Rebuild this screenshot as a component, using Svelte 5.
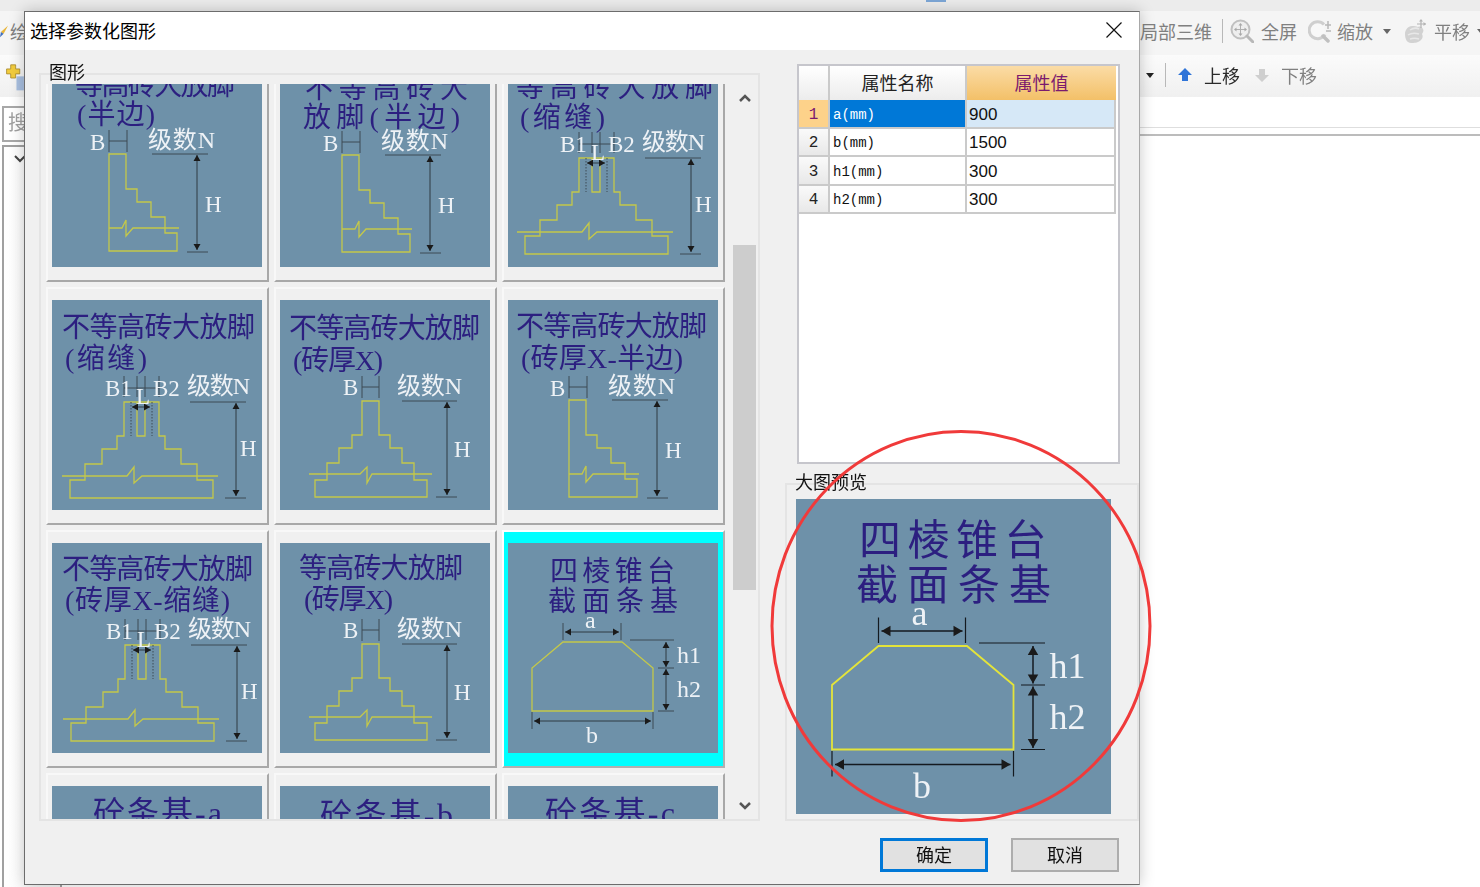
<script>
  const cells = [
    { kind: 'half', dx: 0, dy: 0, t: [['等高砖大放脚', 23, 38, 160], ['(半边)', 25, 67, 78]] },
    { kind: 'half', dx: 5, dy: 1, t: [['不等高砖大', 25, 41, 163], ['放脚(半边)', 23, 70, 157]] },
    { kind: 'slit', dx: -1, dy: -1, t: [['等高砖大放脚', 8, 40, 197], ['(缩缝)', 12, 70, 85]] },
    { kind: 'slit', dx: 0, dy: 0, t: [['不等高砖大放脚', 10, 37, 193], ['(缩缝)', 13, 68, 82]] },
    { kind: 'full', dx: 0, dy: 0, t: [['不等高砖大放脚', 9, 38, 191], ['(砖厚X)', 13, 70, 90]] },
    { kind: 'half', dx: 4, dy: 3, t: [['不等高砖大放脚', 8, 36, 191], ['(砖厚X-半边)', 13, 68, 162]] },
    { kind: 'slit', dx: 1, dy: 0, t: [['不等高砖大放脚', 10, 36, 191], ['(砖厚X-缩缝)', 13, 67, 165]] },
    { kind: 'full', dx: 0, dy: 0, t: [['等高砖大放脚', 19, 35, 164], ['(砖厚X)', 24, 66, 89]] },
    { kind: 'trap', selected: true },
    { kind: 'none', wide: true, t: [['砼条基-a', 41, 38, 129]] },
    { kind: 'none', wide: true, t: [['砼条基-b', 40, 40, 133]] },
    { kind: 'none', wide: true, t: [['砼条基-c', 37, 38, 130]] }
  ];
  const rows = [
    { n: '1', name: 'a(mm)', value: '900', active: true },
    { n: '2', name: 'b(mm)', value: '1500' },
    { n: '3', name: 'h1(mm)', value: '300' },
    { n: '4', name: 'h2(mm)', value: '300' }
  ];
</script>

{#snippet vdim(x, y1, y2)}
  <path class="dim" d="M{x} {y1}V{y2}" />
  <path class="tip" d="M{x} {y1}l-3.500 6h7zM{x} {y2}l-3.500 -6h7z" />
{/snippet}

{#snippet hdim(y, x1, x2)}
  <path class="dim" d="M{x1} {y}H{x2}" />
  <path class="tip" d="M{x1} {y}l6 -3.500v7zM{x2} {y}l-6 -3.500v7z" />
{/snippet}

{#snippet diagram(c, large)}
  <svg class="art" class:large viewBox="0 0 210 210" aria-hidden="true">
    {#if c.t}
      {#each c.t as [text, x, y, len]}
        <text class="ttl" class:wide={c.wide} {x} {y} textLength={len}>{text}</text>
      {/each}
    {/if}
    <g transform="translate({c.dx || 0} {c.dy || 0})">
      {#if c.kind === 'half'}
        <path class="y" d="M57 97H74V132H85V145H99V160H113V176H125V194H57Z" />
        <path class="y" d="M57 171H70L74 163V179L81 171H127" />
        <path class="tick" d="M57 73V95M75 73V95M57 84H75M100 97H156M135 195H156" />
        {@render vdim(145, 98, 193)}
        <text class="lbl" x="38" y="93">B</text>
        <text class="lbl lvl" x="96" y="91" textLength="67">级数N</text>
        <text class="lbl" x="153" y="155">H</text>
      {:else if c.kind === 'full'}
        <path class="y" d="M82 101H99V135H110V148H122V163H134V180H147V197H35V180H47V163H59V148H72V135H82Z" />
        <path class="y" d="M29 174H80L87 167V183L92 174H152" />
        <path class="tick" d="M82 76V98M99 76V98M82 87H99M122 101H177M156 197H177" />
        {@render vdim(167, 102, 195)}
        <text class="lbl" x="63" y="95">B</text>
        <text class="lbl lvl" x="117" y="94" textLength="65">级数N</text>
        <text class="lbl" x="174" y="157">H</text>
      {:else if c.kind === 'slit'}
        <path class="y" d="M72 102H107V136H113V149H129V164H145V180H161V198H18V180H33V164H50V149H65V136H72Z" />
        <path class="y" d="M85 102V136H93V102" />
        <path class="y" d="M10 176H75L82 167V183L90 176H166" />
        <path class="dots" d="M79 102V136M100 102V136" />
        <path class="tick" d="M72 76V97M85 76V97M93 76V97M107 76V97M72 88H107M138 102H194M173 198H194" />
        {@render hdim(107, 80, 98)}
        {@render vdim(184, 103, 196)}
        <text class="lbl" x="53" y="96">B1</text>
        <text class="lbl" x="84" y="104">L</text>
        <text class="lbl" x="101" y="96">B2</text>
        <text class="lbl lvl" x="135" y="94" textLength="63">级数N</text>
        <text class="lbl" x="188" y="156">H</text>
      {:else if c.kind === 'trap'}
        <text class="ttl" x="42" y="38" textLength="125">四棱锥台</text>
        <text class="ttl" x="40" y="68" textLength="130">截面条基</text>
        <path class="y" d="M55 99H114L145 125V168H24V125Z" />
        <path class="tick" d="M55 80V97M113 80V97M122 97H166M150 125H166M150 168H166M24 169V186M145 169V186" />
        {@render hdim(89, 57, 111)}
        {@render vdim(158, 99, 124)}
        {@render vdim(158, 126, 167)}
        {@render hdim(178, 26, 143)}
        <text class="lbl big" x="77" y="85">a</text>
        <text class="lbl big" x="169" y="120">h1</text>
        <text class="lbl big" x="169" y="154">h2</text>
        <text class="lbl big" x="78" y="200">b</text>
      {/if}
    </g>
  </svg>
{/snippet}

{#snippet caret(dark)}
  <svg class="caret" viewBox="0 0 8 5" aria-hidden="true"><path d="M0 0h8L4 5z" fill={dark ? '#222' : '#666'} /></svg>
{/snippet}

<div class="page">
  <div class="strip"><span class="tab-mark"></span></div>

  <div class="bar bar1">
    <svg class="pencil" viewBox="0 0 10 16" aria-hidden="true"><path d="M9 2L4 11 1 9z" fill="#e8b53a" /><path d="M4 11L0 15 1 9z" fill="#3f6fc0" /></svg>
    <span class="tool-text draw">绘</span>
    <div class="tools tools1">
      <span class="tool-text w72">局部三维</span>
      <span class="sep s10"></span>
      <svg class="ico i-full" viewBox="0 0 24 24" aria-hidden="true">
        <circle cx="10.500" cy="10.500" r="9" fill="#eeeeee" stroke="#c0c0c0" stroke-width="2" />
        <path d="M10.500 5V16M5 10.500H16" stroke="#b0b0b0" stroke-width="1" />
        <path d="M10.500 4l-2 2.500h4zM10.500 17l-2 -2.500h4zM4 10.500l2.500 -2v4zM17 10.500l-2.500 -2v4z" fill="#a8a8a8" />
        <path d="M17 17l6 6" stroke="#b8b8b8" stroke-width="3" stroke-linecap="round" />
      </svg>
      <span class="tool-text t7">全屏</span>
      <svg class="ico i-zoom" viewBox="0 0 24 24" aria-hidden="true">
        <path d="M16 5.500A8.500 8.500 0 1 0 17 15.500" fill="#f8f8f8" stroke="#cfcfcf" stroke-width="3" />
        <path d="M20 2V10M17 6H23M18 12h5" stroke="#b8b8b8" stroke-width="1.500" />
        <path d="M15 17l5 5" stroke="#c0c0c0" stroke-width="3.500" stroke-linecap="round" />
      </svg>
      <span class="tool-text t5">缩放</span>
      <span class="caret-wrap c10">{@render caret(false)}</span>
      <svg class="ico i-pan" viewBox="0 0 24 24" aria-hidden="true">
        <path d="M1 15c0-4 3-8 7-8 3 0 4 0 6 1 2-1 4 0 5 2 1 2 0 3-1 5 1 2 1 4-1 6-3 3-7 3-10 3-4 0-6-4-6-9z" fill="#d2d2d2" />
        <path d="M6 11c3-2 7-2 9-1M4 16c3-2 8-2 11-1M6 20c3-1 6-1 9 0" stroke="#e8e8e8" stroke-width="1.500" fill="none" />
        <path d="M17 1V9M13 5H22" stroke="#b4b4b4" stroke-width="1.200" />
        <path d="M17 0l-2 2.500h4zM22 5l-2.500 -2v4z" fill="#b4b4b4" />
      </svg>
      <span class="tool-text t6">平移</span>
      <span class="caret-wrap c7">{@render caret(false)}</span>
    </div>
  </div>

  <div class="bar bar2">
    <svg class="add" viewBox="0 0 24 34" aria-hidden="true">
      <path d="M8 1h6v5h5v6h-5v5H8v-5H3V6h5z" fill="#f2cc3d" stroke="#a88a2c" />
      <rect x="15" y="15" width="9" height="17" fill="#a8bfe0" />
    </svg>
    <div class="tools tools2">
      <span class="caret-wrap">{@render caret(true)}</span>
      <span class="sep s11"></span>
      <svg class="ico-sm up" viewBox="0 0 14 14" aria-hidden="true"><path d="M7 0l7 7H10v6H4V7H0z" fill="#2f74d8" /></svg>
      <span class="tool-text strong t12">上移</span>
      <svg class="ico-sm down" viewBox="0 0 14 14" aria-hidden="true"><path d="M4 1h6v6h4l-7 7-7-7h4z" fill="#cfcfcf" /></svg>
      <span class="tool-text t12">下移</span>
    </div>
  </div>

  <div class="lower">
    <aside class="side">
      <div class="search">搜</div>
      <div class="tree">
        <svg class="chev" viewBox="0 0 12 8" aria-hidden="true"><path d="M1 1l5 5 5-5" fill="none" stroke="#444" stroke-width="2" /></svg>
      </div>
    </aside>
    <div class="canvas"><div class="ruler"></div></div>
  </div>

  <section class="dialog">
    <header class="title">
      <span>选择参数化图形</span>
      <svg class="close" viewBox="0 0 16 16" aria-hidden="true"><path d="M0.500 0.500L15.500 15.500M15.500 0.500L0.500 15.500" stroke="#111" stroke-width="1.200" /></svg>
    </header>
    <div class="body">
      <div class="main">
        <div class="group shapes">
          <span class="legend">图形</span>
          <div class="viewport">
            <div class="grid">
              {#each cells as c}
                <div class="cell" class:selected={c.selected}>
                  <div class="thumb">{@render diagram(c, false)}</div>
                </div>
              {/each}
            </div>
          </div>
          <div class="scrollbar">
            <div class="sb-btn up-btn"><svg viewBox="0 0 12 8" aria-hidden="true"><path d="M1 7l5-5 5 5" fill="none" stroke="#555" stroke-width="2.500" /></svg></div>
            <div class="thumb-bar"></div>
            <div class="sb-btn down-btn"><svg viewBox="0 0 12 8" aria-hidden="true"><path d="M1 1l5 5 5-5" fill="none" stroke="#555" stroke-width="2.500" /></svg></div>
          </div>
        </div>

        <div class="right">
          <div class="props">
            <div class="table">
              <div class="h corner"></div>
              <div class="h">属性名称</div>
              <div class="h hot">属性值</div>
              {#each rows as r}
                <div class="num" class:active={r.active}>{r.n}</div>
                <div class="name" class:active={r.active}>{r.name}</div>
                <div class="val" class:active={r.active}>{r.value}</div>
              {/each}
            </div>
          </div>
          <div class="group preview">
            <span class="legend">大图预览</span>
            <div class="big">{@render diagram({ kind: 'trap', dy: -1 }, true)}</div>
          </div>
        </div>
      </div>
      <footer class="foot">
        <button class="btn primary">确定</button>
        <button class="btn">取消</button>
      </footer>
    </div>
  </section>

  <svg class="ring" viewBox="0 0 392 403" aria-hidden="true">
    <ellipse cx="196" cy="201" rx="189" ry="194.500" fill="none" stroke="#f03a3a" stroke-width="3" />
  </svg>
</div>

<style>
  :global(body) {
    margin: 0;
    background: #fff;
  }
  .page {
    position: relative;
    width: 1480px;
    height: 887px;
    overflow: hidden;
    display: flex;
    flex-direction: column;
    font-family: "Noto Sans CJK SC", "Liberation Sans", sans-serif;
    background: #fff;
  }
  .strip {
    height: 11px;
    background: #ececec;
    flex: none;
  }
  .tab-mark {
    display: block;
    width: 20px;
    height: 2px;
    margin-left: 926px;
    background: #7ca6d6;
  }
  .bar {
    display: flex;
    align-items: center;
    flex: none;
    box-sizing: border-box;
    filter: blur(0.35px);
  }
  .bar1 {
    height: 44px;
    padding-bottom: 4px;
    background: #f5f5f5;
  }
  .bar2 {
    height: 42px;
    padding-bottom: 2px;
    background: linear-gradient(#fbfbfb, #f0f0f0);
  }
  .pencil {
    width: 9px;
    height: 16px;
    flex: none;
  }
  .draw {
    margin-left: 1px;
    color: #5f6a78;
  }
  .add {
    width: 20px;
    height: 28px;
    margin: 9px 0 0 4px;
    align-self: flex-start;
    flex: none;
  }
  .tools {
    margin-left: auto;
    display: flex;
    align-items: center;
    flex: none;
  }
  .tools1 {
    width: 340px;
  }
  .tools2 {
    width: 334px;
  }
  .tool-text {
    font-size: 18px;
    line-height: 24px;
    color: #808080;
    white-space: nowrap;
    flex: none;
  }
  .strong {
    color: #2a2a2a;
  }
  .w72 {
    width: 72px;
  }
  .t5 { margin-left: 5px; }
  .t6 { margin-left: 6px; }
  .t7 { margin-left: 7px; }
  .t12 { margin-left: 12px; }
  .sep {
    width: 1px;
    height: 24px;
    background: #b8b8b8;
    flex: none;
  }
  .s10 { margin-left: 10px; }
  .s11 { margin-left: 11px; }
  .ico {
    flex: none;
    width: 24px;
    height: 24px;
  }
  .i-full { margin-left: 7px; }
  .i-zoom { margin-left: 11px; }
  .i-pan { margin-left: 13px; }
  .caret-wrap {
    display: flex;
    flex: none;
    width: 8px;
  }
  .c10 { margin-left: 10px; }
  .c7 { margin-left: 7px; }
  .caret {
    width: 8px;
    height: 5px;
  }
  .ico-sm {
    width: 14px;
    height: 14px;
    flex: none;
  }
  .ico-sm.up { margin-left: 12px; }
  .ico-sm.down { margin-left: 15px; }
  .lower {
    flex: 1;
    display: flex;
    min-height: 0;
    filter: blur(0.35px);
  }
  .side {
    width: 60px;
    flex: none;
    padding: 9px 0 0 2px;
  }
  .search {
    height: 30px;
    border: 2px solid #a8a8a8;
    padding: 0 0 2px 4px;
    font-size: 20px;
    line-height: 28px;
    color: #a0a0a0;
    background: #fff;
  }
  .tree {
    height: 800px;
    margin-top: 3px;
    border: 2px solid #a0a0a0;
    background: linear-gradient(90deg, #fff, #f4f4f4);
    padding: 8px 0 0 10px;
  }
  .chev {
    display: block;
    width: 12px;
    height: 8px;
  }
  .canvas {
    flex: 1;
  }
  .ruler {
    height: 30px;
    border-bottom: 1px solid #dedede;
    margin-bottom: 6px;
  }
  .canvas::after {
    content: "";
    display: block;
    height: 2px;
    background: #bcbcbc;
  }
  .dialog {
    position: absolute;
    left: 24px;
    top: 11px;
    width: 1116px;
    height: 874px;
    box-sizing: border-box;
    border: 1px solid #6c6c6c;
    border-right-color: #a8a8a8;
    background: #f0f0f0;
    box-shadow: 0 0 14px rgba(0, 0, 0, 0.22);
    display: flex;
    flex-direction: column;
    filter: blur(0.35px);
  }
  .title {
    height: 38px;
    box-sizing: border-box;
    flex: none;
    background: #fff;
    display: flex;
    align-items: center;
    justify-content: space-between;
    padding: 0 17px 2px 5px;
    font-size: 18px;
    color: #000;
  }
  .close {
    width: 16px;
    height: 16px;
  }
  .body {
    flex: 1;
    display: flex;
    flex-direction: column;
    padding-left: 14px;
    min-height: 0;
  }
  .main {
    display: flex;
    gap: 25px;
    height: 771px;
    flex: none;
  }
  .group {
    position: relative;
    box-sizing: border-box;
    border: 2px solid #e4e4e4;
  }
  .legend {
    position: absolute;
    left: 8px;
    top: -15px;
    font-size: 18px;
    line-height: 22px;
    color: #111;
    white-space: nowrap;
  }
  .shapes {
    width: 721px;
    height: 748px;
    margin-top: 23px;
    display: flex;
    padding-right: 2px;
  }
  .viewport {
    width: 692px;
    margin-top: 9px;
    overflow: hidden;
    flex: none;
  }
  .grid {
    margin: -40px 0 0 5px;
    display: grid;
    grid-template-columns: repeat(3, 223px);
    grid-auto-rows: 238px;
    gap: 5px;
  }
  .cell {
    box-sizing: border-box;
    padding: 11px 0 0 4px;
    border: 2px solid;
    border-color: #f8f8f8 #a8a8a8 #a8a8a8 #f8f8f8;
    background: #f0f0f0;
  }
  .cell.selected {
    background: #00ffff;
    border-color: #fff #b0b0b0 #b0b0b0 #fff;
  }
  .thumb {
    width: 210px;
    height: 210px;
  }
  .big {
    width: 315px;
    height: 315px;
    margin: 14px 0 0 9px;
  }
  .art {
    display: block;
    width: 100%;
    height: 100%;
    background: #6e91a9;
    overflow: hidden;
  }
  .ttl {
    font-family: "Liberation Serif", "Noto Sans CJK SC", serif;
    font-size: 28px;
    fill: #2c1f80;
  }
  .ttl.wide {
    font-size: 32px;
  }
  .lbl {
    font-family: "Liberation Serif", "Noto Sans CJK SC", serif;
    font-size: 23px;
    fill: #eef2f6;
  }
  .lbl.lvl {
    font-size: 24px;
  }
  .lbl.big {
    font-size: 24px;
  }
  .y {
    fill: none;
    stroke: #c4c84a;
    stroke-width: 1.300;
  }
  .large .y {
    stroke: #e4e43a;
    stroke-width: 1.200;
  }
  .tick {
    fill: none;
    stroke: #3d4a54;
    stroke-width: 1;
  }
  .large .tick {
    stroke: #141a20;
    stroke-width: 0.800;
  }
  .dim {
    fill: none;
    stroke: #2f3a42;
    stroke-width: 1;
  }
  .large .dim {
    stroke: #141a20;
  }
  .tip {
    fill: #1a1a1a;
  }
  .dots {
    fill: none;
    stroke: #3d4a54;
    stroke-width: 1;
    stroke-dasharray: 1.500 1.500;
  }
  .scrollbar {
    width: 23px;
    flex: none;
    display: flex;
    flex-direction: column;
    background: #f0f0f0;
  }
  .sb-btn {
    display: flex;
    align-items: center;
    justify-content: center;
    flex: none;
  }
  .sb-btn svg {
    width: 12px;
    height: 8px;
  }
  .up-btn {
    height: 46px;
  }
  .thumb-bar {
    height: 345px;
    margin-top: 124px;
    background: #cdcdcd;
    flex: none;
  }
  .down-btn {
    height: 26px;
    margin-top: auto;
    padding-top: 2px;
  }
  .right {
    display: flex;
    flex-direction: column;
    width: 354px;
  }
  .props {
    box-sizing: border-box;
    width: 323px;
    height: 400px;
    margin: 14px 0 0 12px;
    border: 2px solid #c6c6cc;
    background: #fff;
    flex: none;
  }
  .table {
    display: grid;
    grid-template-columns: 31px 137px 149px;
    grid-template-rows: 34px repeat(4, 28.500px);
  }
  .table > div {
    box-sizing: border-box;
    border-right: 2px solid #cacaca;
    border-bottom: 2px solid #cacaca;
    display: flex;
    align-items: center;
    overflow: hidden;
    white-space: nowrap;
  }
  .h {
    justify-content: center;
    font-size: 18px;
    color: #222;
    padding-bottom: 2px;
    background: linear-gradient(#fff, #ececec);
    border-bottom: 0 !important;
  }
  .h.hot {
    color: #7b1a6e;
    background: linear-gradient(#fbdca6, #f3c068);
    border-right: 0 !important;
  }
  .num {
    justify-content: center;
    font-family: "Liberation Mono", monospace;
    font-size: 16px;
    padding-top: 3px;
    color: #222;
    background: linear-gradient(#fafafa, #e8e8e8);
  }
  .num.active {
    color: #7b1a6e;
    background: #fdd28a;
  }
  .name {
    font-family: "Liberation Mono", monospace;
    font-size: 14px;
    padding: 3px 0 0 3px;
    color: #111;
  }
  .name.active {
    color: #fff;
    background: #0078d7;
  }
  .val {
    font-family: "Liberation Sans", sans-serif;
    font-size: 17px;
    padding: 3px 0 0 2px;
    color: #111;
  }
  .val.active {
    background: #d6e8f7;
  }
  .preview {
    height: 338px;
    margin-top: 19px;
    width: 354px;
    flex: none;
  }
  .foot {
    display: flex;
    justify-content: flex-end;
    gap: 23px;
    padding: 17px 20px 0 0;
  }
  .btn {
    box-sizing: border-box;
    width: 108px;
    height: 34px;
    border: 2px solid #adadad;
    background: #e1e1e1;
    font: 18px "Noto Sans CJK SC", sans-serif;
    color: #111;
    padding: 0 0 2px;
  }
  .btn.primary {
    border: 3px solid #0078d7;
  }
  .ring {
    position: absolute;
    left: 765px;
    top: 425px;
    width: 392px;
    height: 403px;
    pointer-events: none;
  }
</style>
